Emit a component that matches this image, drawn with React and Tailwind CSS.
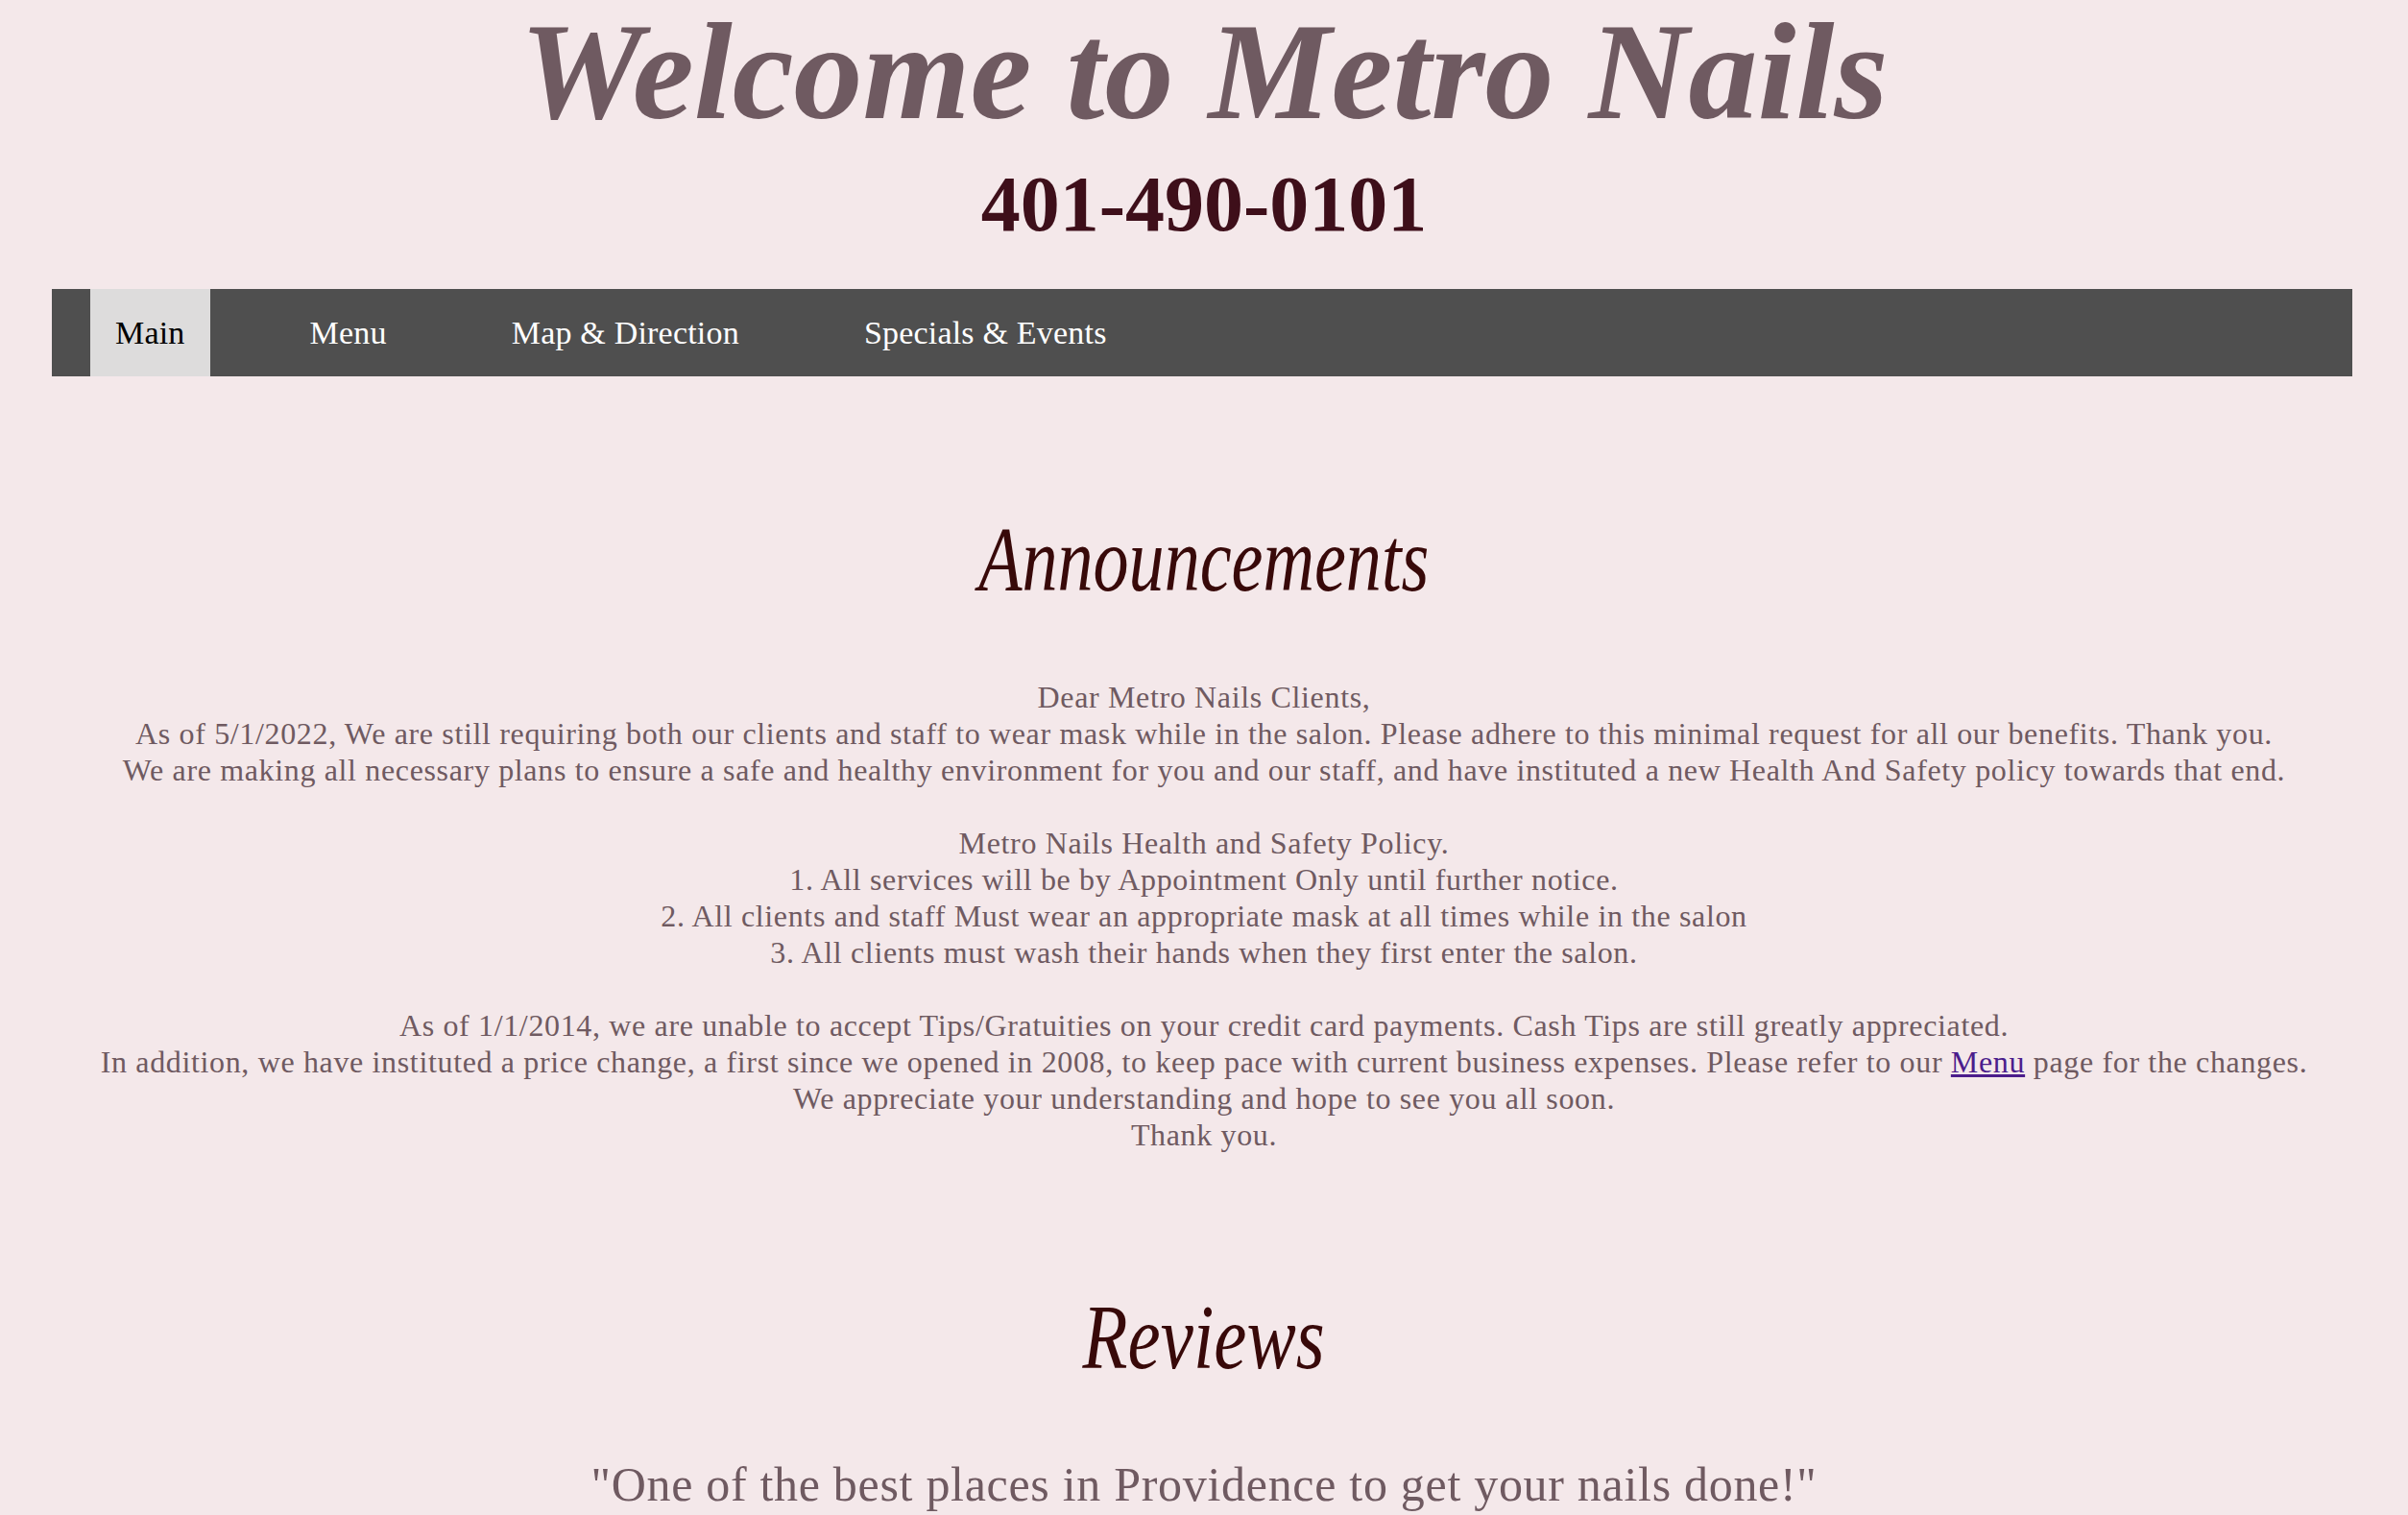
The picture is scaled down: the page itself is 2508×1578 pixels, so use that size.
const serif = "font-['Liberation_Serif','Times_New_Roman',serif]";

const navItems = ['Main', 'Menu', 'Map & Direction', 'Specials & Events'];

function NavBar() {
  return (
    <nav className="ml-[54px] mr-[58px] mt-[47px] flex h-[91px] items-stretch gap-[78px] bg-[#4f4f4f] pl-[40px]">
      {navItems.map((item, i) => (
        <a
          key={item}
          href="#"
          className={
            i === 0
              ? 'flex items-center bg-[#dddcdc] px-[26px] text-[34px] tracking-[0.2px] text-black'
              : 'flex items-center px-[26px] text-[34px] tracking-[0.2px] text-white'
          }
        >
          {item}
        </a>
      ))}
    </nav>
  );
}

function Heading({ children, scale }) {
  return (
    <h2 className="text-center text-[95px] leading-[95px] italic text-[#380909]">
      <span className={'inline-block ' + scale}>{children}</span>
    </h2>
  );
}

export default function App() {
  return (
    <div className={`min-h-screen overflow-hidden bg-[#f4e8ea] ${serif}`}>
      <header className="text-center">
        <h1 className="text-[144px] leading-[150px] font-bold italic text-[#6f5a61]">
          Welcome to Metro Nails
        </h1>
        <p className="mt-[22px] text-[82px] leading-[82px] font-bold text-[#3e0f1a]">401-490-0101</p>
      </header>

      <NavBar />

      <section className="mt-[144px]">
        <Heading scale="scale-x-[0.78]">Announcements</Heading>
        <div className="mx-[40px] mt-[76px] text-center text-[32px] leading-[38px] tracking-[0.65px] whitespace-nowrap text-[#6f5a61]">
          <p>Dear Metro Nails Clients,</p>
          <p>
            As of 5/1/2022, We are still requiring both our clients and staff to wear mask while in the salon. Please adhere to this minimal request for all our benefits. Thank you.
          </p>
          <p>
            We are making all necessary plans to ensure a safe and healthy environment for you and our staff, and have instituted a new Health And Safety policy towards that end.
          </p>
          <p>&nbsp;</p>
          <p>Metro Nails Health and Safety Policy.</p>
          <p>1. All services will be by Appointment Only until further notice.</p>
          <p>2. All clients and staff Must wear an appropriate mask at all times while in the salon</p>
          <p>3. All clients must wash their hands when they first enter the salon.</p>
          <p>&nbsp;</p>
          <p>
            As of 1/1/2014, we are unable to accept Tips/Gratuities on your credit card payments. Cash Tips are still greatly appreciated.
          </p>
          <p>
            In addition, we have instituted a price change, a first since we opened in 2008, to keep pace with current business expenses. Please refer to our{' '}
            <a href="#" className="text-[#4b1d8c] underline">Menu</a> page for the changes.
          </p>
          <p>We appreciate your understanding and hope to see you all soon.</p>
          <p>Thank you.</p>
        </div>
      </section>

      <section className="mt-[145px]">
        <Heading scale="scale-x-[0.81]">Reviews</Heading>
        <p className="mt-[80px] text-center text-[50px] leading-[50px] tracking-[0.7px] text-[#6f5a61]">
          "One of the best places in Providence to get your nails done!"
        </p>
        <p className="mt-[20px] text-center text-[30px] leading-[38px] text-[#6f5a61]">- Providence Monthly</p>
      </section>
    </div>
  );
}
